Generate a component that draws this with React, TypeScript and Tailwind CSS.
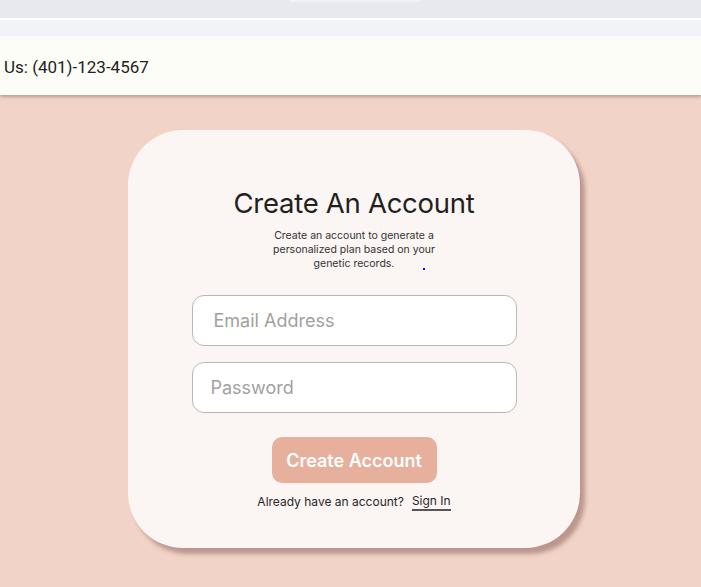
import React from "react";

export default function App() {
  return (
    <div className="w-[701px] h-[587px] overflow-hidden bg-[#f2d3c8] font-['Inter','Noto_Sans',sans-serif]">
      <div className="relative h-[18px] bg-[#e8e9ee]">
        <div className="absolute left-[290px] top-0 h-[2px] w-[130px] rounded-b bg-[#f1f2f5]" />
      </div>
      <div className="h-[2px] bg-white" />
      <div className="h-[16px] bg-[#f2f3f6]" />
      <div className="h-[1px] bg-white" />
      <div className="flex h-[58px] items-center bg-[#fdfdf7] pl-[4px] pt-[3px] shadow-[0_2px_3px_rgba(120,90,80,0.45)]">
        <span className="font-['Roboto',sans-serif] text-[17px] text-[#222]">Us: (401)-123-4567</span>
      </div>

      <div className="flex justify-center pt-[35px] pl-[7px]">
        <div className="flex h-[418px] w-[452px] flex-col items-center rounded-[55px] bg-[#fbf5f3] pt-[56px] shadow-[5px_6px_4px_rgba(150,110,100,0.6)]">
          <h1 className="text-[27.5px] leading-[34px] text-[#231f1f] tracking-[-0.01em]">Create An Account</h1>
          <p className="relative mt-[9px] w-[170px] text-center text-[10.5px] leading-[14px] text-[#333]">
            Create an account to generate a personalized plan based on your genetic records.
            <span className="absolute left-[154px] top-[39px] h-[2px] w-[2px] bg-[#0a0aff]" />
          </p>
          <div className="mt-[24px] flex flex-col gap-[16px]">
            <input
              placeholder="Email Address"
              className="h-[51px] w-[325px] rounded-[12px] border border-[#bdb6b3] bg-white px-[21px] text-[18px] placeholder:text-[#a3a09f] outline-none"
            />
            <input
              placeholder="Password"
              className="h-[51px] w-[325px] rounded-[12px] border border-[#bdb6b3] bg-white px-[18px] text-[18px] placeholder:text-[#a3a09f] outline-none"
            />
          </div>
          <button className="mt-[24px] h-[46px] w-[165px] rounded-[10px] bg-[#e6b09c] text-[18px] font-semibold text-white">
            Create Account
          </button>
          <div className="mt-[10px] flex items-center gap-[8px] text-[12px] text-[#2a2626]">
            <span>Already have an account?</span>
            <span className="border-b-2 border-[#555] leading-[16px]">Sign In</span>
          </div>
        </div>
      </div>
    </div>
  );
}
